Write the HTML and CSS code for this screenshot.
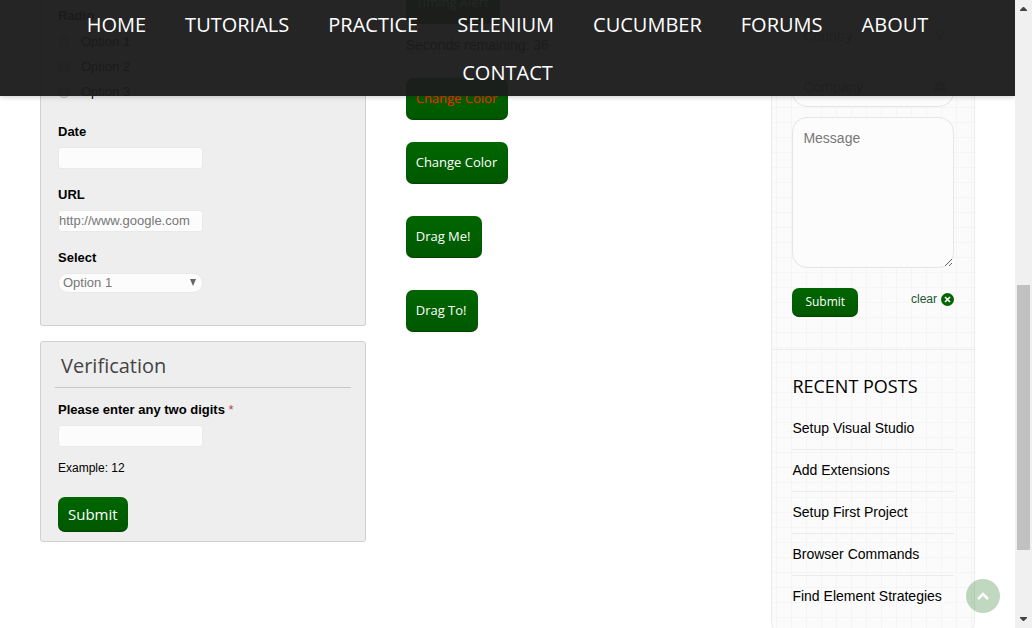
FILE: index.html
```html
<!DOCTYPE html>
<html lang="en">
<head>
<meta charset="utf-8">
<title>Practice Form</title>
<link rel="stylesheet" href="styles.css">
</head>
<body>
<div class="window">
  <div class="viewport">
    <header class="site-header">
      <nav class="site-nav" aria-label="Main">
        <a href="#">HOME</a>
        <a href="#">TUTORIALS</a>
        <a href="#">PRACTICE</a>
        <a href="#">SELENIUM</a>
        <a href="#">CUCUMBER</a>
        <a href="#">FORUMS</a>
        <a href="#">ABOUT</a>
        <a href="#">CONTACT</a>
      </nav>
    </header>

    <div class="page">
      <form class="form-column">
        <section class="panel panel-cut">
          <fieldset class="radio-group">
            <legend class="field-label">Radio</legend>
            <label class="option"><input type="radio" name="option">Option 1</label>
            <label class="option"><input type="radio" name="option">Option 2</label>
            <label class="option"><input type="radio" name="option">Option 3</label>
          </fieldset>
          <div class="field">
            <label class="field-label" for="date">Date</label>
            <input class="text-input" id="date" type="text">
          </div>
          <div class="field">
            <label class="field-label" for="url">URL</label>
            <input class="text-input" id="url" type="text" placeholder="http://www.google.com">
          </div>
          <div class="field">
            <label class="field-label" for="choice">Select</label>
            <span class="select-wrap">
              <select class="select" id="choice"><option>Option 1</option><option>Option 2</option></select>
              <svg class="select-arrow" viewBox="0 0 6 7" aria-hidden="true"><path d="M0 0h6L3 7z"/></svg>
            </span>
          </div>
        </section>

        <section class="panel verification">
          <h2 class="panel-title">Verification</h2>
          <div class="panel-body">
            <div class="field">
              <label class="field-label" for="digits">Please enter any two digits <span class="required">*</span></label>
              <input class="text-input" id="digits" type="text">
            </div>
            <p class="hint">Example: 12</p>
            <button class="button button-large" type="submit">Submit</button>
          </div>
        </section>
      </form>

      <main class="actions">
        <button class="button timing" type="button">Timing Alert</button>
        <p class="countdown">Seconds remaining: 36</p>
        <button class="button button-red" type="button">Change Color</button>
        <button class="button color-button" type="button">Change Color</button>
        <button class="button drag-button" type="button">Drag Me!</button>
        <button class="button drag-button" type="button">Drag To!</button>
      </main>

      <aside class="sidebar">
        <form class="contact">
          <div class="icon-field">
            <input class="round-input" type="text" placeholder="Country" aria-label="Country">
            <svg class="field-icon" viewBox="0 0 12 12" aria-hidden="true"><path fill-rule="evenodd" d="M6 0a4 4 0 0 1 4 4c0 2-2 3-3 8H5C4 7 2 6 2 4a4 4 0 0 1 4-4zm0 2a2 2 0 1 0 0 4 2 2 0 0 0 0-4z"/></svg>
          </div>
          <div class="icon-field">
            <input class="round-input" type="text" placeholder="Company" aria-label="Company">
            <svg class="field-icon" viewBox="0 0 12 12" aria-hidden="true"><path d="M4 3V1h4v2h4v3H0V3h4zm1 0h2V2H5zM0 7h5v1h2V7h5v4H0z"/></svg>
          </div>
          <textarea class="round-input message" placeholder="Message" aria-label="Message"></textarea>
          <div class="contact-actions">
            <button class="button button-small" type="submit">Submit</button>
            <button class="clear" type="reset">clear
              <svg class="clear-icon" viewBox="0 0 13 13" aria-hidden="true"><circle cx="6.500" cy="6.500" r="6.500" fill="#060"/><path d="M4 4l5 5m0-5l-5 5" stroke="#fff" stroke-width="1.700"/></svg>
            </button>
          </div>
        </form>
        <section class="recent">
          <h3 class="recent-title">RECENT POSTS</h3>
          <ul class="post-list">
            <li><a href="#">Setup Visual Studio</a></li>
            <li><a href="#">Add Extensions</a></li>
            <li><a href="#">Setup First Project</a></li>
            <li><a href="#">Browser Commands</a></li>
            <li><a href="#">Find Element Strategies</a></li>
          </ul>
        </section>
      </aside>
    </div>

    <button class="to-top" type="button" aria-label="Back to top">
      <svg viewBox="0 0 12 8" aria-hidden="true"><path d="M1 7l5-5 5 5" fill="none" stroke="#fff" stroke-width="2.500"/></svg>
    </button>
  </div>

  <div class="scroll-rail" aria-hidden="true">
    <svg class="rail-arrow" viewBox="0 0 7 4"><path d="M3 0h1l3 3v1H0V3z"/></svg>
    <div class="rail-track"><div class="rail-thumb"></div></div>
    <svg class="rail-arrow" viewBox="0 0 7 4"><path d="M0 0h7v1L4 4H3L0 1z"/></svg>
  </div>
</div>
</body>
</html>
```

FILE: styles.css
```css
* {
  box-sizing: border-box;
}

body {
  margin: 0;
  background: #fff;
  color: #000;
  font: 13px/20px "Liberation Sans", Arial, sans-serif;
}

button,
input,
select,
textarea {
  font: inherit;
  margin: 0;
}

.window {
  display: grid;
  grid-template-columns: 1fr 17px;
  height: 100vh;
  overflow: hidden;
}

.viewport {
  position: relative;
  overflow: hidden;
}

/* Fixed navigation over the page */
.site-header {
  position: absolute;
  z-index: 2;
  top: 0;
  left: 0;
  right: 0;
  padding: 1px 40px 0;
  background: rgba(28, 28, 28, 0.96);
  box-shadow: 0 1px 5px rgba(0, 0, 0, 0.2);
}

.site-nav {
  display: flex;
  flex-wrap: wrap;
  justify-content: center;
  column-gap: 39px;
  margin-bottom: -1px;
}

.site-nav a {
  color: #fff;
  font: 20px/48px "Open Sans", sans-serif;
  text-decoration: none;
}

.page {
  display: grid;
  grid-template-columns: 8fr 8fr 5fr;
  gap: 40px;
  align-items: start;
  padding: 0 40px;
}

/* Form panels */
.form-column {
  display: grid;
  gap: 15px;
}

.panel {
  background: #eee;
  border: 1px solid #d0d0d0;
  border-radius: 3px;
}

.panel-cut {
  padding: 6px 17px 32px;
  border-top: 0;
  border-radius: 0 0 3px 3px;
}

.radio-group {
  border: 0;
  margin: 0 0 18px;
  padding: 0;
}

.field-label {
  display: block;
  padding: 0;
  font-weight: bold;
}

.radio-group .field-label {
  margin-bottom: 3px;
}

.option {
  display: flex;
  align-items: center;
  gap: 11px;
  height: 25px;
}

.option input {
  width: 12px;
  height: 12px;
  appearance: none;
  border: 1px solid #bbb;
  border-radius: 50%;
  background: #e4e4e4;
}

.field + .field {
  margin-top: 16px;
}

.text-input {
  display: block;
  width: 145px;
  height: 22px;
  margin-top: 5px;
  padding: 0 0 2px;
  border: 1px solid #e9e9e9;
  border-radius: 3px;
  background: #fcfcfc;
}

::placeholder {
  color: #777;
  opacity: 1;
}

.select-wrap {
  position: relative;
  display: block;
  width: 145px;
  margin-top: 5px;
}

.select {
  display: block;
  width: 100%;
  height: 20px;
  padding: 0 4px;
  appearance: none;
  border: 1px solid #e9e9e9;
  border-radius: 10px;
  background: #fcfcfc;
  color: #777;
  line-height: 18px;
}

.select-arrow {
  position: absolute;
  right: 7px;
  top: 6px;
  width: 6px;
  height: 7px;
  fill: #666;
  pointer-events: none;
}

.verification {
  padding: 5px 14px 9px;
}

.panel-title {
  margin: 0;
  padding: 0 6px 2px;
  border-bottom: 1px solid #c8c8c8;
  color: #444;
  font: 20px/38px "Open Sans", sans-serif;
}

.panel-body {
  padding: 12px 3px 0;
}

.required {
  color: #b44;
  font-weight: normal;
}

.hint {
  margin: 11px 0 19px;
  font-size: 12px;
}

/* Buttons */
.button {
  display: block;
  padding: 0 11px 2px 10px;
  border: 0;
  border-radius: 7px;
  background: linear-gradient(#060, #005800);
  box-shadow: inset 0 -1px 1px rgba(0, 0, 0, 0.25);
  color: #fff;
  font: 13px/40px "Open Sans", sans-serif;
}

.button-large {
  padding: 0 10px;
  font-size: 15px;
  line-height: 35px;
}

.button-small {
  padding: 0 13px 2px;
  font-size: 12px;
  line-height: 27px;
}

.button-red {
  color: #f20;
}

.actions {
  display: flex;
  flex-direction: column;
  align-items: flex-start;
}

.timing {
  margin-top: -18px;
}

.countdown {
  margin: 11px 0 23px;
  font-size: 14px;
}

.color-button {
  margin-top: 22px;
}

.drag-button {
  margin-top: 32px;
}

/* Sidebar */
.sidebar {
  border: 1px solid #ebebeb;
  border-top: 0;
  border-radius: 0 0 15px 15px;
  background:
    repeating-linear-gradient(90deg, transparent 0 4px, #f5f5f5 4px 5px, transparent 5px 15px),
    repeating-linear-gradient(transparent 0 2px, #f5f5f5 2px 3px, transparent 3px 15px),
    #fbfbfb;
}

.contact {
  display: grid;
  gap: 10px;
  padding: 15px 20px 32px;
  border-bottom: 1px solid #ebebeb;
}

.icon-field {
  position: relative;
}

.round-input {
  display: block;
  width: 100%;
  height: 41px;
  padding: 0 10px;
  border: 1px solid #e5e5e5;
  border-radius: 15px;
  background: #fcfcfc;
  font-size: 14px;
}

.field-icon {
  position: absolute;
  right: 8px;
  top: 14px;
  width: 12px;
  height: 12px;
  fill: #aaa;
}

.message {
  height: 151px;
  padding: 10px;
}

.contact-actions {
  display: flex;
  align-items: flex-start;
  justify-content: space-between;
  padding-top: 10px;
}

.clear {
  display: flex;
  align-items: center;
  gap: 4px;
  padding: 1px 0;
  border: 0;
  background: none;
  color: #253;
  font-size: 12px;
}

.clear-icon {
  width: 13px;
  height: 13px;
}

.recent {
  padding: 24px 20px 18px;
}

.recent-title {
  margin: 0 0 10px;
  font: 18px/24px "Open Sans", sans-serif;
}

.post-list {
  margin: 0;
  padding: 0;
  list-style: none;
}

.post-list li {
  border-bottom: 1px solid #ebebeb;
}

.post-list li:last-child {
  border-bottom: 0;
}

.post-list a {
  display: block;
  color: #000;
  font-size: 14px;
  line-height: 41px;
  text-decoration: none;
  white-space: nowrap;
}

.to-top {
  position: absolute;
  right: 15px;
  bottom: 15px;
  display: grid;
  place-items: center;
  width: 34px;
  height: 34px;
  padding: 0;
  border: 0;
  border-radius: 50%;
  background: rgba(0, 100, 0, 0.25);
}

.to-top svg {
  width: 12px;
  height: 8px;
}

/* Window scroll rail */
.scroll-rail {
  display: flex;
  flex-direction: column;
  align-items: center;
  padding: 7px 2px;
  background: #f0f0f0;
}

.rail-arrow {
  width: 7px;
  height: 4px;
  fill: #444;
}

.rail-track {
  display: grid;
  flex: 1;
  grid-template-rows: 274fr 265fr 67fr;
  width: 100%;
}

.rail-thumb {
  grid-row: 2;
  background: #c1c1c1;
}
```
